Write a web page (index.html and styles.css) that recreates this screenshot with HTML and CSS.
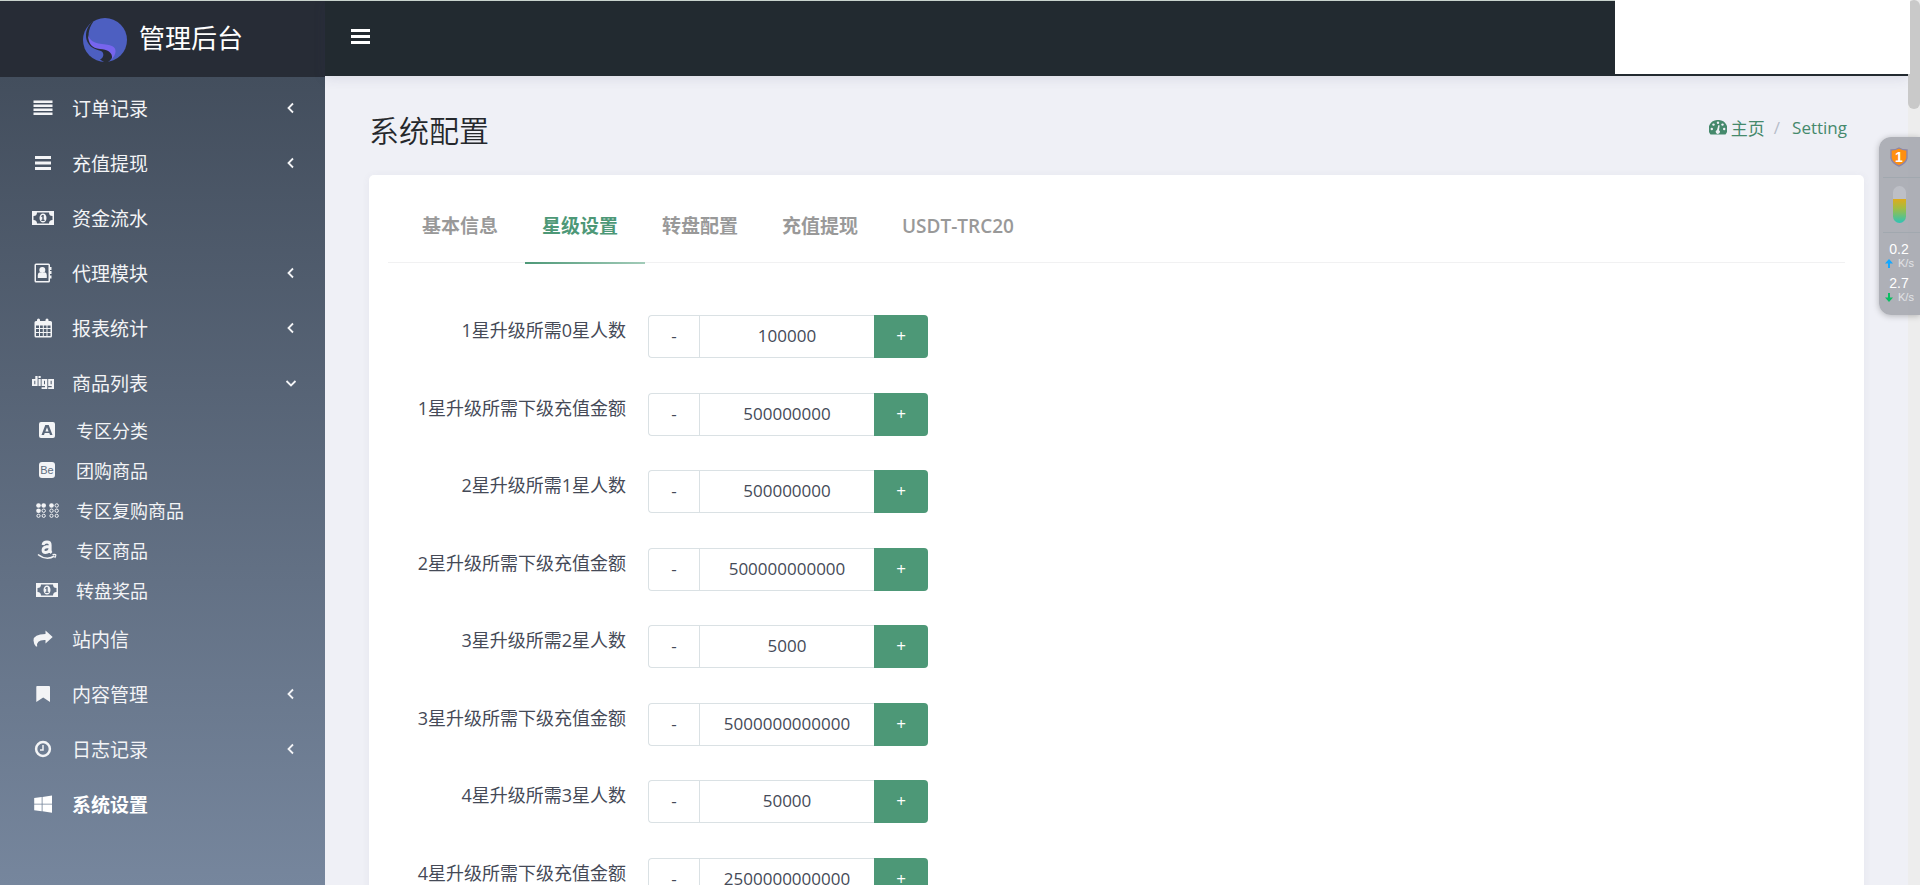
FILE: index.html
```
<!DOCTYPE html>
<html lang="zh-CN">
<head>
<meta charset="utf-8">
<title>系统配置</title>
<link rel="stylesheet" href="styles.css">
</head>
<body>
<svg class="sprite" aria-hidden="true">
  <symbol id="chev" viewBox="0 0 12 12"><path d="M8 1.5L3.5 6L8 10.5" fill="none" stroke="currentColor" stroke-width="1.8"/></symbol>
  <symbol id="money" viewBox="0 0 22 14"><path fill-rule="evenodd" d="M0 0H22V14H0ZM5 1.500A3.500 3.500 0 0 1 1.500 5V9A3.500 3.500 0 0 1 5 12.500H17A3.500 3.500 0 0 1 20.500 9V5A3.500 3.500 0 0 1 17 1.500ZM11 2.500C13 2.500 14.500 4.500 14.500 7S13 11.500 11 11.500S7.500 9.500 7.500 7S9 2.500 11 2.500ZM10.300 4L9 5.300L9.700 6L10.300 5.600V8.800H9.300V9.900H12.600V8.800H11.700V4Z"/></symbol>
</svg>
<div class="app">
  <aside class="sidebar">
    <a class="brand" href="#">
      <svg class="logo" viewBox="0 0 44 44"><circle cx="22" cy="22" r="22" fill="#4d5fc1"/><path d="M8.500 4.500C3 10 1.500 18 4.500 24C8 31 14 31.500 18 33C21.500 34.500 21 40 17 41.500L21 44H25C28 42 31 38 29.500 34C27 28.500 14 31 8 25C4 20 5 11 10.500 3.500Z" fill="#272c36"/><path d="M5.200 17C8 28 22 25 29 28C34 30 33.500 36 29 41C30 34 24 31.500 17 31C9 30 5 26 5.200 17Z" fill="#7765ee"/></svg>
      <span>管理后台</span>
    </a>
    <nav class="menu">
      <a href="#"><svg class="ico" viewBox="0 0 20 20"><path d="M.500 2.500H19.500V5H.500ZM.500 6.500H19.500V9H.500ZM.500 10.500H19.500V13H.500ZM.500 14.500H19.500V17H.500Z"/></svg><span>订单记录</span><svg class="chev"><use href="#chev"/></svg></a>
      <a href="#"><svg class="ico" viewBox="0 0 20 20"><path d="M2 3H18V6H2ZM2 8.500H18V11.500H2ZM2 14H18V17H2Z"/></svg><span>充值提现</span><svg class="chev"><use href="#chev"/></svg></a>
      <a href="#"><svg class="ico wide"><use href="#money"/></svg><span>资金流水</span></a>
      <a href="#"><svg class="ico" viewBox="0 0 20 20"><path fill-rule="evenodd" d="M3 .500H15.500Q17 .500 17 2V4H18.500V7H17V8H18.500V11H17V12.500H18.500V15.500H17V18Q17 19.500 15.500 19.500H3Q1.500 19.500 1.500 18V2Q1.500 .500 3 .500ZM3 2V18H15.500V2Z"/><circle cx="9.300" cy="7" r="3"/><path d="M4.800 15V12Q5 9.200 7 9.200Q9.300 11 11.600 9.200Q13.800 9.500 13.800 12V15Z"/></svg><span>代理模块</span><svg class="chev"><use href="#chev"/></svg></a>
      <a href="#"><svg class="ico" viewBox="0 0 20 20"><path fill-rule="evenodd" d="M3 3H4V2Q4 .500 5.500 .500T7 2V3H12.500V2Q12.500 .500 14 .500T15.500 2V3H17.500Q19 3 19 4.500V18Q19 19.500 17.500 19.500H3Q1.500 19.500 1.500 18V4.500Q1.500 3 3 3ZM3 7.500V10H6V7.500ZM7 7.500V10H9.800V7.500ZM10.800 7.500V10H13.500V7.500ZM14.500 7.500V10H17.500V7.500ZM3 11V14H6V11ZM7 11V14H9.800V11ZM10.800 11V14H13.500V11ZM14.500 11V14H17.500V11ZM3 15V18H6V15ZM7 15V18H9.800V15ZM10.800 15V18H13.500V15ZM14.500 15V18H17.500V15Z"/></svg><span>报表统计</span><svg class="chev"><use href="#chev"/></svg></a>
      <a href="#"><svg class="ico wide" viewBox="0 0 22 14"><path fill-rule="evenodd" d="M3.300 0H5.600V10H0V3H3.300ZM2.300 4.800V8.200H3.300V4.800ZM6.500 0H8.700V2H6.500ZM6.500 3H8.700V10H6.500ZM9.600 3H15.300V13H9.600V11.300H13V10H9.600ZM12 4.800V8.200H13V4.800ZM16.200 3H22V13H16.200V11.300H19.700V10H16.200ZM18.600 4.800V8.200H19.700V4.800Z"/></svg><span>商品列表</span><svg class="chev open"><use href="#chev"/></svg></a>
      <div class="submenu">
        <a href="#"><svg class="ico" viewBox="0 0 20 20"><path fill-rule="evenodd" d="M4 2H16Q18 2 18 4V16Q18 18 16 18H4Q2 18 2 16V4Q2 2 4 2ZM8.300 5L4.500 15H7L7.700 13H12.300L13 15H15.500L11.700 5ZM10 7.200L11.600 11.500H8.400Z"/></svg><span>专区分类</span></a>
        <a href="#"><span class="ico letters">Be</span><span>团购商品</span></a>
        <a href="#"><svg class="ico braille" viewBox="0 0 23 15"><g><circle cx="2.500" cy="2.500" r="2.300"/><circle cx="7.700" cy="2.500" r="2.300"/><circle cx="2.500" cy="7.700" r="2.300"/><circle cx="15.500" cy="2.500" r="2.300"/></g><g fill="none" stroke="currentColor"><circle cx="7.700" cy="7.700" r="1.700"/><circle cx="2.500" cy="12.800" r="1.600"/><circle cx="7.700" cy="12.800" r="1.600"/><circle cx="20.700" cy="2.500" r="1.700"/><circle cx="15.500" cy="7.700" r="1.700"/><circle cx="20.700" cy="7.700" r="1.700"/><circle cx="15.500" cy="12.800" r="1.600"/><circle cx="20.700" cy="12.800" r="1.600"/></g></svg><span>专区复购商品</span></a>
        <a href="#"><svg class="ico" viewBox="0 0 20 20"><g fill="none" stroke="currentColor"><path d="M6 5Q6.500 2 10 2Q13.200 2 13.200 5V10Q13.200 12 14.500 13M13 6.500Q6 6.500 6 10Q6 12.500 8.500 12.500Q12.500 12.300 13 8" stroke-width="2.800"/><path d="M1 14.500Q9.500 21 17.500 16" stroke-width="1.500"/><path d="M15.500 14.600Q18.500 14 18.800 14.800T17.800 18" stroke-width="1.200"/></g></svg><span>专区商品</span></a>
        <a href="#"><svg class="ico wide"><use href="#money"/></svg><span>转盘奖品</span></a>
      </div>
      <a href="#"><svg class="ico" viewBox="0 0 20 20"><path d="M12.500 1.500L19.700 8L12.500 14.500V11Q3 10.500 4.200 17.500H3Q.500 14.500 .500 11.500Q.500 5 12.500 5Z"/></svg><span>站内信</span></a>
      <a href="#"><svg class="ico" viewBox="0 0 20 20"><path d="M4 2H16Q17 2 17 3V18L10.200 13.500L3.300 18V3Q3.300 2 4 2Z"/></svg><span>内容管理</span><svg class="chev"><use href="#chev"/></svg></a>
      <a href="#"><svg class="ico" viewBox="0 0 20 20"><circle cx="10" cy="10" r="6.900" fill="none" stroke="currentColor" stroke-width="2.500"/><path d="M10 6V11H7" fill="none" stroke="currentColor" stroke-width="1.500"/></svg><span>日志记录</span><svg class="chev"><use href="#chev"/></svg></a>
      <a class="current" href="#"><svg class="ico" viewBox="0 0 20 20"><path d="M1.200 4L8.700 3V9.700H1.200ZM9.500 2.900L19 1.500V9.700H9.500ZM1.200 10.500H8.700V17.200L1.200 16.200ZM9.500 10.500H19V18.700L9.500 17.300Z"/></svg><span>系统设置</span></a>
    </nav>
  </aside>
  <div class="page">
    <header class="topbar">
      <button class="toggle" type="button" aria-label="菜单"><svg viewBox="0 0 19 15"><path d="M0 0H19V3H0ZM0 6H19V9H0ZM0 12H19V15H0Z"/></svg></button>
    </header>
    <main class="content">
      <div class="head">
        <h1>系统配置</h1>
        <nav class="crumbs">
          <a href="#"><svg viewBox="0 0 18 15"><path fill-rule="evenodd" d="M9 0A9 9 0 0 1 16.500 14.500H1.500A9 9 0 0 1 9 0ZM9.400 5L8 10A2 2 0 1 0 10 10.200L10.700 5.500Z"/><g fill="#eff0f6"><circle cx="9" cy="2.700" r="1.200"/><circle cx="4.500" cy="4.600" r="1.200"/><circle cx="2.800" cy="9" r="1.200"/><circle cx="13.500" cy="4.600" r="1.200"/><circle cx="15.200" cy="9" r="1.200"/></g></svg><span>主页</span></a>
          <span class="sep">/</span>
          <a href="#">Setting</a>
        </nav>
      </div>
      <section class="card">
        <nav class="tabs">
          <a href="#">基本信息</a>
          <a class="active" href="#">星级设置</a>
          <a href="#">转盘配置</a>
          <a href="#">充值提现</a>
          <a href="#">USDT-TRC20</a>
        </nav>
        <form class="form">
          <div class="row"><label for="f1">1星升级所需0星人数</label><div class="stepper"><button type="button">-</button><input id="f1" type="text" value="100000"><button class="plus" type="button">+</button></div></div>
          <div class="row"><label for="f2">1星升级所需下级充值金额</label><div class="stepper"><button type="button">-</button><input id="f2" type="text" value="500000000"><button class="plus" type="button">+</button></div></div>
          <div class="row"><label for="f3">2星升级所需1星人数</label><div class="stepper"><button type="button">-</button><input id="f3" type="text" value="500000000"><button class="plus" type="button">+</button></div></div>
          <div class="row"><label for="f4">2星升级所需下级充值金额</label><div class="stepper"><button type="button">-</button><input id="f4" type="text" value="500000000000"><button class="plus" type="button">+</button></div></div>
          <div class="row"><label for="f5">3星升级所需2星人数</label><div class="stepper"><button type="button">-</button><input id="f5" type="text" value="5000"><button class="plus" type="button">+</button></div></div>
          <div class="row"><label for="f6">3星升级所需下级充值金额</label><div class="stepper"><button type="button">-</button><input id="f6" type="text" value="5000000000000"><button class="plus" type="button">+</button></div></div>
          <div class="row"><label for="f7">4星升级所需3星人数</label><div class="stepper"><button type="button">-</button><input id="f7" type="text" value="50000"><button class="plus" type="button">+</button></div></div>
          <div class="row"><label for="f8">4星升级所需下级充值金额</label><div class="stepper"><button type="button">-</button><input id="f8" type="text" value="2500000000000"><button class="plus" type="button">+</button></div></div>
        </form>
      </section>
    </main>
  </div>
  <div class="track"><div class="thumb"></div></div>
</div>
<div class="topline"></div>
<div class="blank"></div>
<aside class="meter">
  <div class="shield"><svg viewBox="0 0 18 20"><path d="M9 1Q12 3 17 3V11Q16 16 9 19Q2 16 1 11V3Q6 3 9 1Z" fill="#ff8f0f" stroke="#8d86a8" stroke-width="1.400"/></svg><b>1</b></div>
  <div class="tube-box"><div class="tube"></div></div>
  <div class="speed"><span>0.2</span><small><svg viewBox="0 0 8 9"><path d="M4 0L8 4.500H5V9H3V4.500H0Z" fill="#14a8ff"/></svg>K/s</small></div>
  <div class="speed"><span>2.7</span><small><svg viewBox="0 0 8 9"><path d="M4 9L8 4.500H5V0H3V4.500H0Z" fill="#0bbd62"/></svg>K/s</small></div>
</aside>
</body>
</html>
```
FILE: styles.css
```
* { box-sizing: border-box; }
body { margin: 0; font-family: "Open Sans", "Noto Sans CJK SC", sans-serif; color: #454a57; background: #eff0f6; }
a { text-decoration: none; color: inherit; }
svg { fill: currentColor; flex: none; }
button, input { font: inherit; color: inherit; margin: 0; }
.sprite { position: absolute; width: 0; height: 0; }
.app { display: flex; height: 100vh; overflow: hidden; }

.sidebar { width: 325px; flex: none; display: flex; flex-direction: column; background: #272c36; color: #fff; }
.brand { height: 77px; flex: none; display: flex; align-items: center; justify-content: center; gap: 12px; padding: 2px 0 0 1px; font-size: 26px; line-height: 40px; }
.brand span { padding-bottom: 3px; }
.logo { width: 44px; height: 44px; }
.menu { flex: 1; padding-top: 3px; background: linear-gradient(#434e5d, #76869d); }
.menu a { display: flex; align-items: center; height: 55px; padding: 0 28px 0 33px; color: #f3f4f6; font-size: 19px; }
.ico { width: 20px; height: 20px; margin-right: 19px; }
.ico.wide { width: 22px; height: 14px; margin: 0 18px 0 -1px; }
.ico.braille { width: 23px; height: 15px; margin: 0 17px 0 -1px; }
.ico.letters { width: 16px; height: 16px; margin: 0 21px 0 2px; border-radius: 3px; background: #f3f4f6; color: #5e6d7f; font: 11px/16px "Liberation Sans", sans-serif; text-align: center; }
.chev { width: 12px; height: 12px; margin-left: auto; }
.chev.open { transform: rotate(-90deg); }
.submenu { padding-bottom: 1px; }
.submenu a { height: 40px; padding-left: 37px; font-size: 18px; }
.submenu .ico { flex: none; }
.menu .current { font-weight: 700; color: #fff; }

.page { flex: 1; min-width: 0; }
.topbar { height: 76px; display: flex; align-items: center; padding: 0 26px 3px; background: #222a30; box-shadow: 0 2px 12px rgba(60, 60, 110, .12); }
.toggle { padding: 0; border: 0; background: none; color: #fff; line-height: 0; }
.toggle svg { width: 19px; height: 15px; }
.content { padding: 0 44px; }
.head { display: flex; justify-content: space-between; height: 99px; padding: 33px 17px 0 0; }
h1 { margin: 0; font-size: 30px; line-height: 44px; font-weight: 350; color: #25282c; }
.crumbs { display: flex; height: 36px; align-items: center; font-size: 17px; color: #45896c; }
.crumbs a { display: flex; align-items: center; gap: 4px; }
.crumbs svg { width: 18px; height: 15px; }
.sep { padding: 0 12px 0 9px; color: #b6bcc9; }

.card { padding: 17px 19px; height: 100vh; background: #fff; border-radius: 5px; box-shadow: 0 1px 8px rgba(60, 60, 110, .06); }
.tabs { display: flex; height: 71px; padding-left: 17px; border-bottom: 1px solid #f1f1f2; }
.tabs a { height: 72px; min-width: 120px; padding: 0 17px; font-size: 19px; line-height: 68px; font-weight: 600; color: #999; }
.tabs .active { color: #4d9877; font-weight: 700; border-bottom: 2px solid; border-image: linear-gradient(90deg, #4d9877, #a3ccb9) 1; }
.form { padding-top: 52px; }
.row { display: grid; grid-template-columns: 260px 1fr; margin-bottom: 35px; }
.row:nth-child(even) { margin-bottom: 34px; }
.row label { padding-right: 22px; text-align: right; font-size: 18px; line-height: 31px; white-space: nowrap; }
.stepper { display: flex; width: 280px; height: 43px; font-size: 17px; }
.stepper button { width: 51px; padding: 0 0 2px; border: 1px solid #dae1e4; border-right: 0; border-radius: 4px 0 0 4px; background: #fff; }
.stepper input { flex: 1; min-width: 0; padding: 0 0 2px; border: 1px solid #dae1e4; border-right: 0; border-radius: 0; text-align: center; outline: 0; }
.stepper .plus { width: 54px; border: 0; border-radius: 0 4px 4px 0; background: #4d9877; color: #fff; }

.track { width: 12px; background: #ededed; }
.thumb { height: 109px; border-radius: 6px; background: #c9c9c9; }
.topline { position: absolute; top: 0; left: 0; right: 12px; height: 1px; background: #c9d3cd; }
.blank { position: absolute; top: 0; right: 10px; width: 295px; height: 74px; background: #fff; }
.meter { position: absolute; top: 137px; right: 0; width: 41px; height: 178px; padding-left: 4px; border-radius: 12px 0 0 12px; background: rgba(170, 172, 179, .95); box-shadow: 0 1px 6px rgba(0, 0, 0, .25); color: #fff; font-family: "Liberation Sans", sans-serif; }
.shield { display: grid; place-items: center; height: 41px; padding-right: 5px; border-bottom: 1px solid #a1a8af; }
.shield > * { grid-area: 1 / 1; }
.shield svg { width: 18px; height: 20px; }
.shield b { font-size: 14px; line-height: 18px; }
.tube-box { display: grid; place-items: center; height: 55px; margin-bottom: 2px; padding: 0 5px 2px 0; border-bottom: 1px solid #a1a8af; }
.tube { width: 13px; height: 37px; border-radius: 7px; background: linear-gradient(#bdbfc6 0 35%, #dfab1c 35%, #a3bd42 60%, #2ec4b6); }
.speed { display: flex; flex-direction: column; height: 34px; padding-top: 6px; font-size: 14px; line-height: 16px; text-align: center; }
.speed span { padding-right: 5px; }
.speed small { display: flex; align-items: center; gap: 5px; padding-left: 2px; font-size: 11px; line-height: 12px; color: #e2e3e6; }
.speed svg { width: 8px; height: 9px; }
```
